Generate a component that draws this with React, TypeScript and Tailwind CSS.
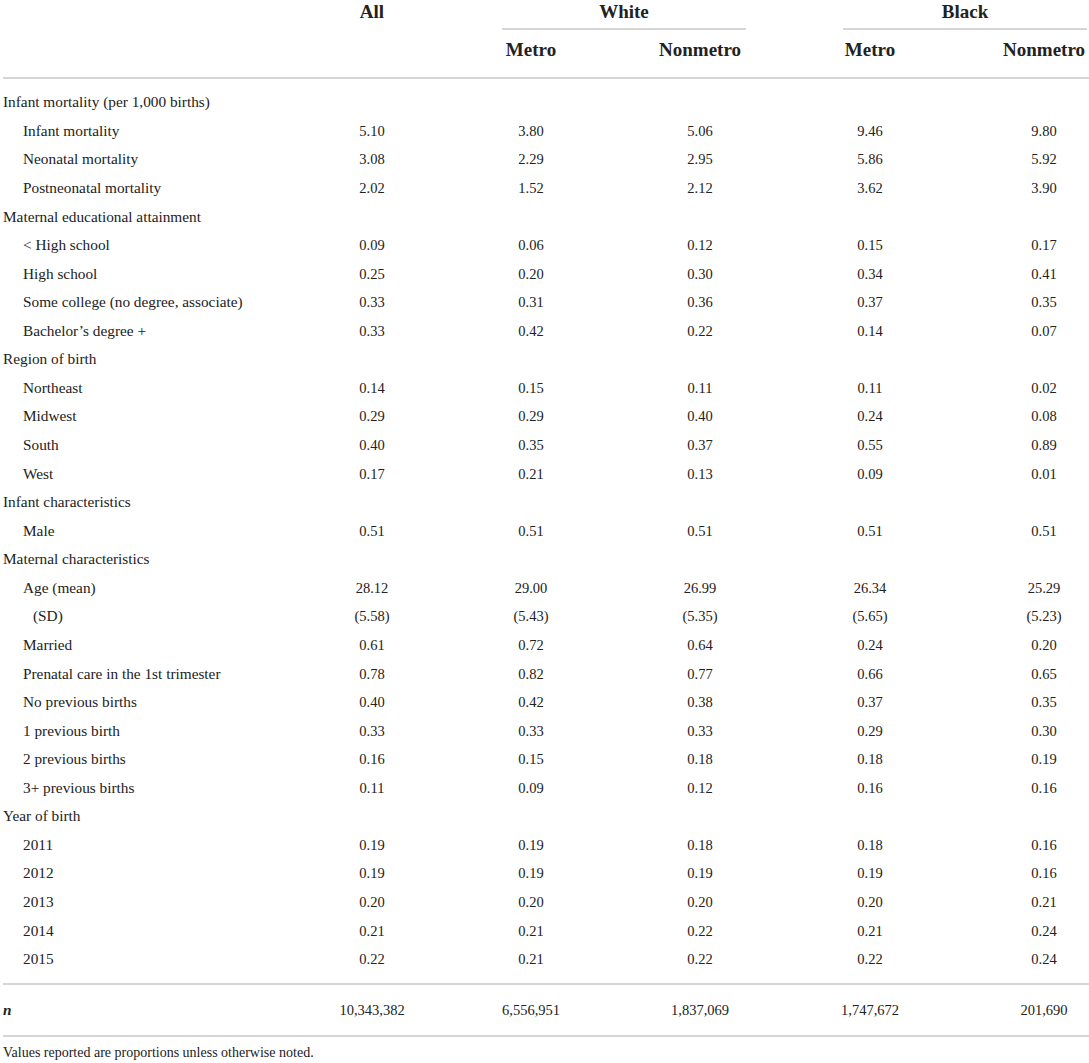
import React from "react";

type Row = { label: string; level: 0 | 1 | 2; values?: string[] };

// grid columns: label | All | White metro | White nonmetro | Black metro | Black nonmetro
const cols = "grid grid-cols-[297px_144px_174px_164px_176px_172px]";

const rows: Row[] = [
  { label: "Infant mortality (per 1,000 births)", level: 0 },
  { label: "Infant mortality", level: 1, values: ["5.10", "3.80", "5.06", "9.46", "9.80"] },
  { label: "Neonatal mortality", level: 1, values: ["3.08", "2.29", "2.95", "5.86", "5.92"] },
  { label: "Postneonatal mortality", level: 1, values: ["2.02", "1.52", "2.12", "3.62", "3.90"] },
  { label: "Maternal educational attainment", level: 0 },
  { label: "< High school", level: 1, values: ["0.09", "0.06", "0.12", "0.15", "0.17"] },
  { label: "High school", level: 1, values: ["0.25", "0.20", "0.30", "0.34", "0.41"] },
  { label: "Some college (no degree, associate)", level: 1, values: ["0.33", "0.31", "0.36", "0.37", "0.35"] },
  { label: "Bachelor’s degree +", level: 1, values: ["0.33", "0.42", "0.22", "0.14", "0.07"] },
  { label: "Region of birth", level: 0 },
  { label: "Northeast", level: 1, values: ["0.14", "0.15", "0.11", "0.11", "0.02"] },
  { label: "Midwest", level: 1, values: ["0.29", "0.29", "0.40", "0.24", "0.08"] },
  { label: "South", level: 1, values: ["0.40", "0.35", "0.37", "0.55", "0.89"] },
  { label: "West", level: 1, values: ["0.17", "0.21", "0.13", "0.09", "0.01"] },
  { label: "Infant characteristics", level: 0 },
  { label: "Male", level: 1, values: ["0.51", "0.51", "0.51", "0.51", "0.51"] },
  { label: "Maternal characteristics", level: 0 },
  { label: "Age (mean)", level: 1, values: ["28.12", "29.00", "26.99", "26.34", "25.29"] },
  { label: "(SD)", level: 2, values: ["(5.58)", "(5.43)", "(5.35)", "(5.65)", "(5.23)"] },
  { label: "Married", level: 1, values: ["0.61", "0.72", "0.64", "0.24", "0.20"] },
  { label: "Prenatal care in the 1st trimester", level: 1, values: ["0.78", "0.82", "0.77", "0.66", "0.65"] },
  { label: "No previous births", level: 1, values: ["0.40", "0.42", "0.38", "0.37", "0.35"] },
  { label: "1 previous birth", level: 1, values: ["0.33", "0.33", "0.33", "0.29", "0.30"] },
  { label: "2 previous births", level: 1, values: ["0.16", "0.15", "0.18", "0.18", "0.19"] },
  { label: "3+ previous births", level: 1, values: ["0.11", "0.09", "0.12", "0.16", "0.16"] },
  { label: "Year of birth", level: 0 },
  { label: "2011", level: 1, values: ["0.19", "0.19", "0.18", "0.18", "0.16"] },
  { label: "2012", level: 1, values: ["0.19", "0.19", "0.19", "0.19", "0.16"] },
  { label: "2013", level: 1, values: ["0.20", "0.20", "0.20", "0.20", "0.21"] },
  { label: "2014", level: 1, values: ["0.21", "0.21", "0.22", "0.21", "0.24"] },
  { label: "2015", level: 1, values: ["0.22", "0.21", "0.22", "0.22", "0.24"] },
];

const totals = ["10,343,382", "6,556,951", "1,837,069", "1,747,672", "201,690"];

const indent = ["pl-0", "pl-[20px]", "pl-[30px]"];

function Values({ values }: { values?: string[] }) {
  if (!values) return null;
  return (
    <>
      {values.map((v, i) => (
        <div key={i} className="text-center text-[14.5px] leading-5 whitespace-nowrap">
          {v}
        </div>
      ))}
    </>
  );
}

export default function App() {
  return (
    <div className="w-[1089px] h-[1063px] overflow-hidden bg-white pl-[3px] font-['Liberation_Serif',serif] text-[#222]">
      <div className="w-[1130px]">
        {/* header */}
        <div className={cols + " border-b-2 border-[#d6d6d6] text-[19px] font-bold leading-6"}>
          <div className="row-span-2" />
          <div className="text-center">All</div>
          <div className="col-span-2">
            <div className="ml-[58px] mr-[36px] h-[30px] border-b-2 border-[#d6d6d6] text-center">White</div>
          </div>
          <div className="col-span-2">
            <div className="ml-[61px] mr-[43px] h-[30px] border-b-2 border-[#d6d6d6] text-center">Black</div>
          </div>
          <div />
          <div className="pt-[8px] pb-[15px] text-center">Metro</div>
          <div className="pt-[8px] pb-[15px] text-center">Nonmetro</div>
          <div className="pt-[8px] pb-[15px] text-center">Metro</div>
          <div className="pt-[8px] pb-[15px] text-center">Nonmetro</div>
        </div>

        {/* body */}
        <div className="pt-[9px] pb-[10px] border-b-2 border-[#d6d6d6]">
          {rows.map((r, i) => (
            <div key={i} className={cols + " h-[28.57px] items-center"}>
              <div className={"text-[15.3px] leading-5 whitespace-nowrap " + indent[r.level]}>{r.label}</div>
              <Values values={r.values} />
            </div>
          ))}
        </div>

        {/* sample size */}
        <div className="pt-[10px] pb-[10.5px] border-b-2 border-[#d6d6d6]">
          <div className={cols + " h-[28.57px] items-center"}>
            <div className="text-[15.3px] leading-5 font-bold italic">n</div>
            <Values values={totals} />
          </div>
        </div>
      </div>

      <p className="pt-[6px] text-[14px] leading-5">Values reported are proportions unless otherwise noted.</p>
    </div>
  );
}
